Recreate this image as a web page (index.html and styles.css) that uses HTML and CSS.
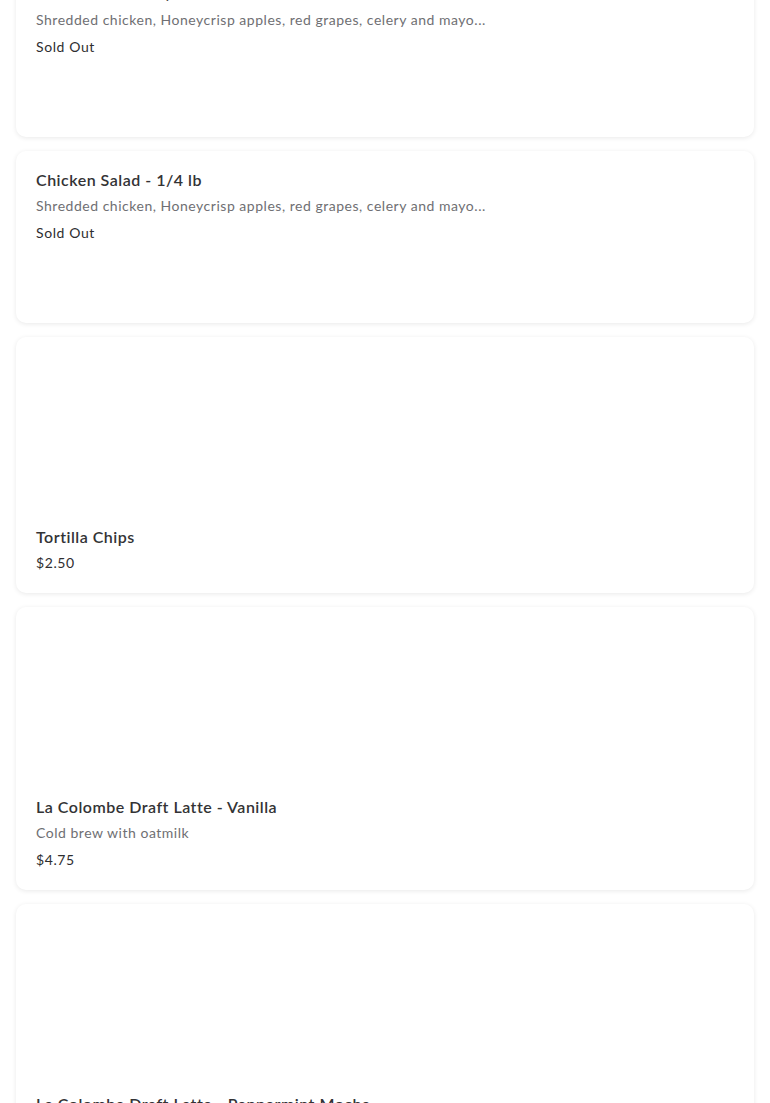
FILE: index.html
```html
<!DOCTYPE html>
<html lang="en">
<head>
<meta charset="utf-8">
<title>Menu</title>
<link rel="stylesheet" href="styles.css">
</head>
<body>
<main class="list">
  <article class="card card-soldout">
    <h3 class="title">Chicken Salad - 1/2 lb</h3>
    <p class="desc">Shredded chicken, Honeycrisp apples, red grapes, celery and mayo...</p>
    <p class="meta">Sold Out</p>
  </article>
  <article class="card card-soldout">
    <h3 class="title">Chicken Salad - 1/4 lb</h3>
    <p class="desc">Shredded chicken, Honeycrisp apples, red grapes, celery and mayo...</p>
    <p class="meta">Sold Out</p>
  </article>
  <article class="card">
    <div class="media"></div>
    <h3 class="title">Tortilla Chips</h3>
    <p class="meta">$2.50</p>
  </article>
  <article class="card">
    <div class="media"></div>
    <h3 class="title">La Colombe Draft Latte - Vanilla</h3>
    <p class="desc">Cold brew with oatmilk</p>
    <p class="meta">$4.75</p>
  </article>
  <article class="card">
    <div class="media"></div>
    <h3 class="title">La Colombe Draft Latte - Peppermint Mocha</h3>
    <p class="desc">Cold brew with oatmilk</p>
    <p class="meta">$4.75</p>
  </article>
</main>
</body>
</html>
```

FILE: styles.css
```css
html, body {
  margin: 0;
  padding: 0;
  background: #ffffff;
}
body {
  font-family: "Lato", "Liberation Sans", sans-serif;
  color: #2e2e30;
  overflow: hidden;
}
.list {
  display: flex;
  flex-direction: column;
  gap: 14px;
  padding: 0 16px;
  margin-top: -35px;
}
.card {
  display: flex;
  flex-direction: column;
  gap: 7px;
  background: #fff;
  border-radius: 10px;
  padding: 20px;
  box-sizing: border-box;
  box-shadow: 0 1px 5px rgba(0, 0, 0, 0.09);
}
.card-soldout {
  min-height: 172px;
}
.media {
  height: 164px;
}
.title {
  margin: 0;
  font-size: 16px;
  line-height: 18px;
  font-weight: 600;
  color: #333335;
  letter-spacing: 0.5px;
}
.desc {
  margin: 0;
  font-size: 14px;
  line-height: 20px;
  color: #6f6f73;
  letter-spacing: 0.52px;
}
.meta {
  margin: 0;
  font-size: 14px;
  line-height: 20px;
  color: #2e2e30;
  letter-spacing: 0.6px;
}
```
